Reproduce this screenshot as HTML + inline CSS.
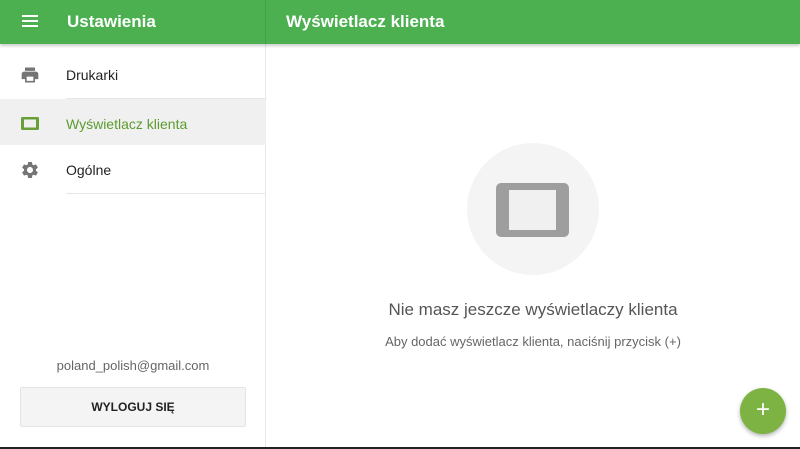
<!DOCTYPE html>
<html><head><meta charset="utf-8"><style>
*{margin:0;padding:0;box-sizing:border-box}
body{width:800px;height:449px;overflow:hidden;background:#fff;font-family:"Liberation Sans",sans-serif;position:relative}
.bar{position:absolute;left:0;top:0;width:800px;height:44px;background:#4caf50;box-shadow:0 2px 3px rgba(0,0,0,.2);z-index:2}
.bar .div{position:absolute;left:265px;top:0;width:1px;height:44px;background:#45a049}
.t{position:absolute;color:#fff;font-size:17px;font-weight:bold;top:12px}
.side{position:absolute;left:0;top:44px;width:266px;height:403px;border-right:1px solid #e8e8e8}
.item{position:absolute;left:0;width:266px;height:47px;font-size:14px;color:#222}
.item span{position:absolute;left:66px;top:17px}
.item svg{position:absolute;left:20px;top:15px}
.line{position:absolute;left:66px;width:200px;height:1px;background:#e6e6e6}
.bottom{position:absolute;left:0;top:447px;width:800px;height:2px;background:#222}
</style></head><body>
<div class="bar"><div class="div"></div>
<svg style="position:absolute;left:22px;top:14px" width="16" height="14"><rect y="1" width="16" height="2" fill="#fff"/><rect y="6" width="16" height="2" fill="#fff"/><rect y="11" width="16" height="2" fill="#fff"/></svg>
<div class="t" style="left:67px">Ustawienia</div>
<div class="t" style="left:286px">Wyświetlacz klienta</div>
</div>
<div class="side">
<div class="item" style="top:6px"><svg width="20" height="20" viewBox="0 0 24 24"><path fill="#757575" d="M19 8H5c-1.66 0-3 1.34-3 3v6h4v4h12v-4h4v-6c0-1.66-1.34-3-3-3zm-3 11H8v-5h8v5zM18 3H6v4h12V3z"/></svg><span>Drukarki</span></div>
<div class="line" style="top:54px"></div>
<div class="item" style="top:55px;background:#f0f0f0;height:46px"><svg width="20" height="20" viewBox="0 0 20 20"><rect x="1" y="3" width="18" height="13" rx="1.5" fill="#689f38"/><rect x="4" y="5.5" width="12" height="8" fill="#f0f0f0"/></svg><span style="color:#5d9b2f">Wyświetlacz klienta</span></div>
<div class="item" style="top:101px"><svg width="20" height="20" viewBox="0 0 24 24"><path fill="#757575" d="M19.14 12.94c.04-.3.06-.61.06-.94 0-.32-.02-.64-.07-.94l2.03-1.58a.49.49 0 00.12-.61l-1.920-3.320a.488.488 0 00-.59-.22l-2.39.96c-.5-.38-1.030-.7-1.620-.94l-.36-2.54a.484.484 0 00-.48-.41h-3.84c-.24 0-.43.17-.47.41l-.36 2.54c-.59.24-1.130.57-1.620.94l-2.390-.96c-.22-.08-.47 0-.59.22L2.74 8.87c-.12.21-.08.47.12.61l2.03 1.58c-.05.3-.09.63-.09.94s.02.64.07.94l-2.03 1.58a.49.49 0 00-.12.61l1.92 3.32c.12.22.37.29.59.22l2.39-.96c.5.38 1.03.7 1.62.94l.36 2.54c.05.24.24.41.48.41h3.84c.24 0 .44-.17.47-.41l.36-2.54c.59-.24 1.13-.56 1.62-.94l2.39.96c.22.08.47 0 .59-.22l1.92-3.32c.12-.22.07-.47-.12-.61l-2.01-1.58zM12 15.6c-1.98 0-3.6-1.62-3.6-3.6s1.62-3.6 3.6-3.6 3.6 1.62 3.6 3.6-1.62 3.6-3.6 3.6z"/></svg><span>Ogólne</span></div>
<div class="line" style="top:149px"></div>
<div style="position:absolute;left:0;width:266px;top:314px;text-align:center;font-size:13px;color:#666">poland_polish@gmail.com</div>
<div style="position:absolute;left:20px;top:343px;width:226px;height:40px;background:#f4f4f4;border:1px solid #e4e4e4;border-radius:2px;text-align:center;line-height:38px;font-size:12px;font-weight:bold;color:#222">WYLOGUJ SIĘ</div>
</div>
<div style="position:absolute;left:467px;top:143px;width:132px;height:132px;border-radius:50%;background:#f4f4f4"></div>
<div style="position:absolute;left:496px;top:183px;width:73px;height:54px;border-radius:5px;background:#9e9e9e"></div>
<div style="position:absolute;left:509px;top:190px;width:47px;height:40px;background:#f0f0f0"></div>
<div style="position:absolute;left:266px;width:534px;top:300px;text-align:center;font-size:17px;color:#555">Nie masz jeszcze wyświetlaczy klienta</div>
<div style="position:absolute;left:266px;width:534px;top:334px;text-align:center;font-size:13px;color:#666">Aby dodać wyświetlacz klienta, naciśnij przycisk (+)</div>
<div style="position:absolute;left:740px;top:388px;width:46px;height:46px;border-radius:50%;background:#7cb342;box-shadow:0 2px 4px rgba(0,0,0,.3);color:#fff;text-align:center;line-height:44px;font-size:24px">+</div>
<div class="bottom"></div>
</body></html>
